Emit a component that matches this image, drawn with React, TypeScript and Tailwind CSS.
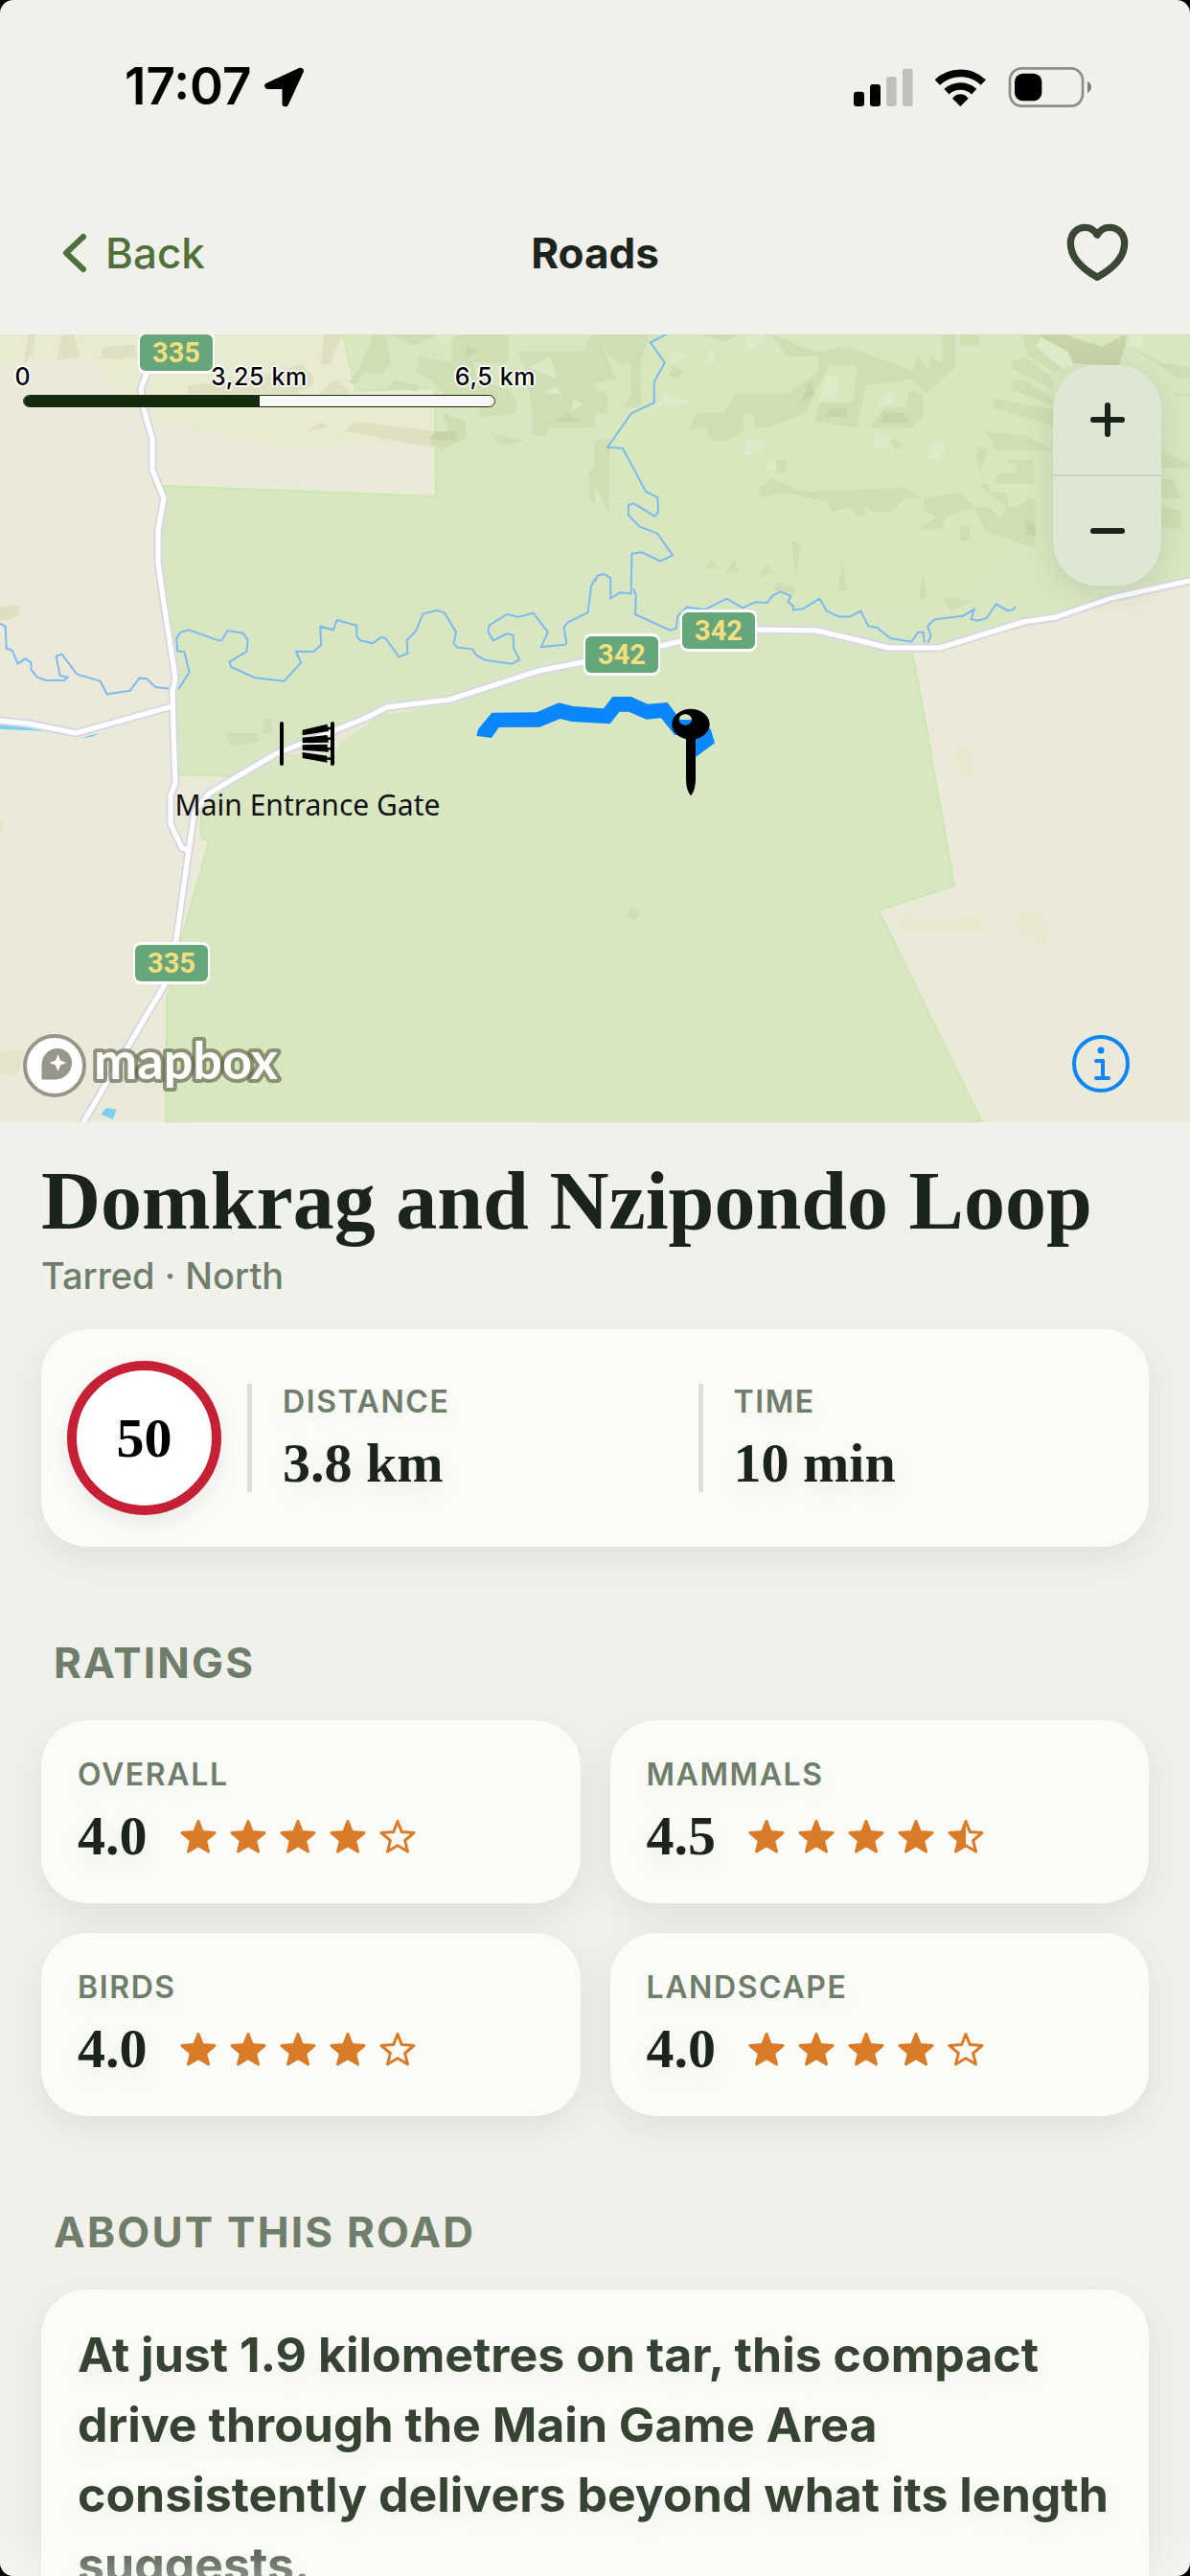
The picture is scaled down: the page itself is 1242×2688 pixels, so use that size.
import React from "react";

const sans = "font-['Inter','Liberation_Sans',sans-serif]";
const serif = "font-['Liberation_Serif',serif]";

/* Terrain and rivers are stored per map tile, in tile units. */
const NW = "translate(0 -9) scale(0.39605 0.33333)";
const NE = "translate(621 -9) scale(0.39605 0.33333)";
const SW = "translate(0 401) scale(0.39605 0.33333)";
const SE = "translate(621 401) scale(0.39605 0.33333)";
const ROUTE = "translate(480 291) scale(0.33333)";

const woodsNW = [
  "958,26 980,26 975,60 958,100 948,135 918,178 938,180 962,145 1005,150 1030,118 1018,38 1000,26",
  "1025,26 1155,26 1090,62",
  "1190,26 1340,26 1340,115 1250,115 1255,165 1345,205 1363,235 1250,230 1180,225 1130,165 1095,145 1105,95 1190,115",
  "1265,235 1363,230 1358,275 1265,285",
  "1365,80 1540,80 1558,26 1568,26 1568,318 1450,318 1437,345 1402,345 1400,235 1382,130",
  "1290,335 1385,360 1320,375",
  "1168,275 1228,300 1228,350 1165,390 1130,365 1150,330 1180,330",
  "1552,455 1568,450 1568,560 1552,535",
  "1040,170 1105,185 1100,205 1020,195",
];
const scrubNW = [
  "75,26 95,26 85,90 62,122",
  "165,26 195,26 210,95 150,108",
  "275,65 355,60 360,98 262,105",
  "855,26 905,26 880,80 870,122 845,120",
  "495,185 560,180 640,165 720,150 790,120 828,160 825,185 780,212 495,212",
  "885,168 930,212 840,212",
  "808,330 845,302 866,316",
  "935,300 1150,330 1150,382 908,330",
  "0,878 50,876 50,905 15,925 0,920",
];
const woodsNE = [
  "0,26 145,26 135,60 120,110 120,255 72,257 94,215 94,115 60,120 20,65 55,165 0,180",
  "0,195 33,212 33,272 0,272",
  "0,362 40,350 36,583 0,500",
  "270,26 380,26 340,50",
  "505,95 590,95 588,145 510,212 367,212 342,272 268,272 243,330 292,315 305,360 345,360 392,330 392,272 417,272 417,318 455,318 555,272 615,125 690,125 680,240 592,240 578,300 690,318 715,185 835,168 875,212 950,125 950,26 915,26 915,120 885,95 878,140 850,95 838,140 665,65 580,80 465,26",
  "727,318 760,258 820,255 828,200 864,215 864,285 835,318",
  "430,508 468,478 550,520 815,507 865,540 965,522 1000,568 925,598 913,638 853,638 900,598 865,575 865,540 815,540 780,582 730,582 713,558 713,596 690,596 678,566 625,582 612,550 495,522 440,538",
  "1000,568 1040,568 1060,598 1110,612 1060,625 1085,568 1035,522 1012,494 1035,494 1040,522 1085,522 1090,568 1120,565 1138,540 1160,540 1160,698 1025,640",
  "1050,494 1065,462 1110,462 1110,435 1075,420 1150,420 1160,494",
  "1025,330 1140,345 1207,390 1060,390",
  "1050,228 1207,260 1207,315 1050,255",
  "1100,168 1135,170 1207,228 1207,248 1100,200",
  "1100,108 1135,100 1207,165 1207,200 1100,135",
  "1125,26 1180,26 1160,65 1230,135 1207,145 1140,90",
  "1400,60 1493,115 1568,130 1568,162 1535,168 1493,130",
  "1493,205 1568,215 1568,222",
  "518,672 541,685 529,785", "652,730 663,825 640,832", "864,778 876,850 852,860",
  "305,730 328,758 293,758", "368,730 379,772 343,770", "455,745 466,772 430,788",
  "470,830 480,803 527,818 527,843", "913,848 1000,862 938,890",
  "478,418 504,418 504,462 478,462", "962,626 987,626 987,672 962,672",
  "962,26 1012,26 1012,62 962,62", "1000,375 1036,390 1015,460", "780,347 812,375 790,390",
  "1493,395 1568,430 1568,450 1493,440", "1493,478 1522,480 1546,540 1493,540",
  "1493,565 1546,580 1546,640 1493,630", "205,125 230,142 222,168 193,155",
];
const ridgesNE = [
  "605,285 618,257 664,257 664,285", "750,303 765,273 815,273 826,303", "540,245 568,170 578,215",
  "1172,26 1235,26 1280,45 1335,65 1400,26 1398,60 1380,125 1260,118 1245,80 1180,38",
  "1138,610 1160,628 1160,660 1136,650",
];
const meadowsNE = [
  "202,80 255,95 200,122", "308,68 318,115 293,122", "183,212 260,240 185,245 145,285",
  "403,360 443,362 440,390 390,405", "453,418 475,418 475,450 453,450",
  "740,335 775,350 770,380 730,388", "890,360 925,375 905,418 877,415",
  "395,35 443,28 440,50 405,78", "610,155 640,152 640,210 590,240", "775,200 790,235 745,255",
  "1175,38 1245,80 1262,125 1230,130 1160,65", "1410,26 1447,35 1440,65 1400,62",
];
const riversNW = [
  "0,932 14,940 17,1010 32,1016 47,1058 67,1042 82,1054 82,1076 98,1100 122,1110 170,1109 178,1101 158,1094 148,1034 163,1028 203,1091 264,1112 282,1153 343,1142 367,1103 387,1105 410,1131 450,1136",
  "470,1138 499,1085 486,1021 468,1018 465,980 474,960 498,952 575,985 584,985 600,954 641,962 653,985 650,1019 605,1052 609,1068 672,1102 749,1112 793,1054 780,1019 826,1020 846,999 844,941 878,952 888,921 940,938 940,971 950,985 981,994 1006,974 1016,978 1051,1036 1074,1026 1072,984 1095,957 1115,901 1151,891 1171,898 1202,959 1196,994 1206,1007 1245,1012 1255,1031 1278,1046 1349,1058 1369,1045 1354,1010 1352,968 1336,963 1300,985 1286,957 1290,937 1336,903 1367,911 1405,899 1444,959 1426,1005 1488,998 1493,994 1486,945 1496,928 1549,898 1558,815 1568,792",
];
const riversNE = [
  "0,800 6,782 24,777 41,790 41,853 66,835 95,838 97,713 124,709 172,737 205,718 164,650 117,628 88,592 88,561 102,556 158,596 167,582 165,537 134,519 73,383 33,380 95,275 156,240 156,175 184,115 146,52 195,22",
  "101,823 108,843 106,903 198,953 214,947 218,908 242,881 290,888 347,854 389,883 422,865 453,867 470,843 489,832 516,846 509,863 523,878 522,890 548,886 592,854 610,892 642,910 670,911 700,893 721,941 743,944 778,978 834,989 851,959 865,959 868,992",
  "877,993 885,971 877,940 894,919 970,908 999,888 991,918 1008,923 1032,915 1057,871 1087,891 1102,889 1108,878",
];
const roads = [
  "0,403 30,406 79,416 180,388",
  "155,20 153,41 147,57 150,78 159,109 159,141 171,171 165,204 165,238 170,274 183,358 180,373 181,411 183,468 178,481 178,511 190,536 197,538",
  "87,822 172,678 184,631 197,538 203,498 218,479 287,438 380,401 404,389 469,381 562,351 608,342 690,325 740,313 791,308 853,309 928,327 981,327 1068,300 1102,295 1160,275 1242,257",
];

function Patches({ tile, fill, shapes }: { tile: string; fill: string; shapes: string[] }) {
  return (
    <g transform={tile} fill={fill}>
      {shapes.map((p) => <polygon key={p} points={p} />)}
    </g>
  );
}

function Rivers({ tile, lines }: { tile: string; lines: string[] }) {
  return (
    <g transform={tile} fill="none" stroke="#7db9f2" strokeWidth="2">
      {lines.map((p) => <polyline key={p} points={p} vectorEffect="non-scaling-stroke" />)}
    </g>
  );
}

function Shield({ x, y, label }: { x: number; y: number; label: string }) {
  return (
    <g>
      <rect x={x - 40} y={y - 22} width="80" height="44" rx="8" fill="#fff" />
      <rect x={x - 38} y={y - 19} width="76" height="38" rx="6" fill="#65a67b" />
      <text x={x} y={y + 10} textAnchor="middle" fill="#f4df80" className="font-['Roboto',sans-serif] text-[29px] font-bold">
        {label}
      </text>
    </g>
  );
}

function RoadMap() {
  return (
    <svg viewBox="0 0 1242 822" className="block w-full" role="img" aria-label="Map of the road">
      <rect width="1242" height="822" fill="#ebe9d7" />
      <polygon points="0,0 356,0 368,60 452,60 452,110 300,120 160,90 90,20 0,30" fill="#e9ead2" />
      <polygon
        points="358,0 371,59 454,56 455,169 172,158 174,171 165,204 165,236 183,355 180,372 182,401 187,459 242,461 210,498 210,525 218,530 190,628 174,694 173,822 1025,822 917,601 996,575 965,401 952,331 981,328 1102,295 1160,274 1242,256 1242,0"
        fill="#d8e7c1"
        stroke="#cbe8b2"
        strokeWidth="2"
      />
      <polygon points="621,20 1090,20 1080,200 1000,280 800,290 700,220 640,150" fill="#d8e8bd" />
      <polygon points="250,560 420,520 520,640 560,822 200,822 220,700" fill="#d8e8be" />
      <polygon points="352,411 378,402 404,392 455,386 430,393 398,396 354,428 350,438 300,438" fill="#e9e8d2" />
      <Patches tile={NW} fill="#e0dfc2" shapes={scrubNW} />
      <Patches tile={NW} fill="#cfdfb3" shapes={woodsNW} />
      <Patches
        tile={NW}
        fill="#c7d4a8"
        shapes={["1130,355 1150,330 1203,330 1203,362", "1465,300 1495,272 1525,300", "1230,65 1262,78 1230,95"]}
      />
      <Patches
        tile={NW}
        fill="#dbe9c4"
        shapes={["1155,26 1212,26 1165,62", "1450,98 1467,165 1392,130", "1510,230 1538,243 1505,270", "1465,190 1480,215 1430,210"]}
      />
      <Patches tile={NE} fill="#cfdfb3" shapes={woodsNE} />
      <Patches tile={NE} fill="#c7d4a8" shapes={ridgesNE} />
      <Patches tile={NE} fill="#deebcb" shapes={meadowsNE} />
      <Patches tile={SW} fill="#cfdfb3" shapes={["597,45 680,45 680,72 607,88", "695,0 718,0 718,45 695,45"]} />
      <Patches tile={SW} fill="#e4e4cb" shapes={["0,300 10,355 0,362", "0,1042 65,1035 55,1090 35,1120 0,1105"]} />
      <Patches tile={SW} fill="#7bd0f2" shapes={["280,1218 307,1223 298,1254 266,1238", "0,12 130,40 0,32", "210,60 262,45 245,56"]} />
      <Patches tile={SE} fill="#cedfb4" shapes={["94,590 119,605 107,632 82,620"]} />
      <Patches tile={SE} fill="#e9e8d0" shapes={["950,90 990,88 998,190 955,165", "815,600 850,632 1010,620 1035,662 800,665", "1130,590 1198,632 1188,718 1105,645"]} />
      <Patches tile={SE} fill="#d8e8be" shapes={["520,725 620,750 620,985 570,980 530,900 510,830", "95,390 180,410 150,460 95,450", "800,400 870,405 860,465 795,470"]} />
      <Rivers tile={NW} lines={riversNW} />
      <Rivers tile={NE} lines={riversNE} />
      <g fill="none" stroke="#d6d8e6" strokeWidth="9" strokeLinejoin="round">
        {roads.map((p) => <polyline key={p} points={p} />)}
      </g>
      <g fill="none" stroke="#fff" strokeWidth="5" strokeLinejoin="round">
        {roads.map((p) => <polyline key={p} points={p} />)}
      </g>
      <Shield x={184} y={19} label="335" />
      <Shield x={179} y={656} label="335" />
      <Shield x={649} y={334} label="342" />
      <Shield x={750} y={309} label="342" />

      <g stroke="#000" strokeWidth="4" strokeLinecap="round">
        <path d="M294 406V448M347 406V448" />
      </g>
      <Patches
        tile={SW}
        fill="#000"
        shapes={[
          "797,35 862,17 866,39 797,52", "797,59 862,51 866,74 797,76", "797,82 862,80 866,104 797,98",
          "797,105 862,116 862,137 797,123", "862,26 878,26 878,34 862,34", "862,58 878,58 878,66 862,66",
          "862,90 878,90 878,98 862,98", "862,121 878,121 878,129 862,129",
        ]}
      />
      <text x="321" y="502" textAnchor="middle" fill="#111" className="font-['Noto_Sans',sans-serif] text-[30px]">
        Main Entrance Gate
      </text>

      <g transform={ROUTE}>
        <polygon
          points="100,311 240,310 310,280 355,291 450,298 478,261 536,261 588,284 650,279 690,333 727,333 785,362 798,406 738,450 712,450 710,385 672,380 630,328 584,332 529,308 500,308 470,346 350,339 314,330 250,356 122,357 99,390 52,384 57,363"
          fill="#0a86ff"
        />
        <path
          fillRule="evenodd"
          d="M723 299c32 0 59 21 59 48s-27 48-59 48-59-21-59-48 27-48 59-48zM706 316c-11 0-20 8-20 17s9 17 20 17 20-8 20-17-9-17-20-17z"
        />
        <path d="M708 388h30v130q0 36-15 53q-15-17-15-53z" />
      </g>

      <g>
        <circle cx="57" cy="763" r="31" fill="#fff" stroke="#98968a" strokeWidth="4" />
        <path d="M43.500 777.500V763C43.500 752 51 745 60 745S75 752 75 760C75 770 67 777.500 57 777.500Z" fill="#98968a" />
        <path d="M60.500 751L63 757.500L69.500 760L63 762.500L60.500 769L58 762.500L51.500 760L58 757.500Z" fill="#fff" />
        <text
          x="98"
          y="777"
          fill="#fff"
          stroke="#55593f"
          strokeOpacity="0.6"
          strokeWidth="8"
          strokeLinejoin="round"
          paintOrder="stroke"
          className="font-['Lato',sans-serif] text-[54px] font-bold"
        >
          mapbox
        </text>
      </g>
    </svg>
  );
}

function MapControls() {
  const cell = "flex h-[114px] w-[113px] items-center justify-center";
  return (
    <div className="absolute top-8 right-[30px] flex flex-col overflow-hidden rounded-[46px] bg-[#dde7d2] shadow-[0_6px_30px_rgba(60,80,40,0.14)]">
      <button type="button" aria-label="Zoom in" className={cell}>
        <svg viewBox="0 0 38 38" className="size-[38px]" stroke="#1a241b" strokeWidth="6" strokeLinecap="round">
          <path d="M19 4V34M4 19H34" />
        </svg>
      </button>
      <div className="h-0.5 bg-[#c9d1bf]" />
      <button type="button" aria-label="Zoom out" className={cell}>
        <svg viewBox="0 0 38 38" className="size-[38px]" stroke="#1a241b" strokeWidth="6" strokeLinecap="round">
          <path d="M4 19H34" />
        </svg>
      </button>
    </div>
  );
}

function ScaleBar() {
  const label =
    "absolute top-0 -translate-x-1/2 whitespace-nowrap [text-shadow:2px_0_#fff,-2px_0_#fff,0_2px_#fff,0_-2px_#fff,1px_1px_#fff,-1px_-1px_#fff,1px_-1px_#fff,-1px_1px_#fff]";
  return (
    <div className="absolute top-7 left-6 w-[493px]">
      <div className="relative h-[35px] text-[25px] leading-8 font-medium tracking-wide text-black">
        <span className={label + " left-0"}>0</span>
        <span className={label + " left-1/2"}>3,25 km</span>
        <span className={label + " left-full"}>6,5 km</span>
      </div>
      <div className="h-[13px] overflow-hidden rounded-full border border-[#152b10] bg-[#f7f7f7]">
        <div className="h-full w-1/2 bg-[#152b10]" />
      </div>
    </div>
  );
}

const STAR = "M19 2.500L23.300 13.600L36 14.500L26.600 22.500L29.500 34L19 27.700L8.500 34L11.400 22.500L2 14.500L14.700 13.600Z";

function Star({ fill }: { fill: number }) {
  return (
    <svg viewBox="0 0 38 37" className="h-[37px] w-[38px]" aria-hidden="true">
      <path d={STAR} fill={fill === 1 ? "#da7b29" : "none"} stroke="#da7b29" strokeWidth="3" strokeLinejoin="round" />
      {fill === 0.5 && (
        <path d="M19 2.500V27.700L8.500 34L11.400 22.500L2 14.500L14.700 13.600Z" fill="#da7b29" />
      )}
    </svg>
  );
}

const card = "rounded-[48px] bg-[#fbfcf7] shadow-[0_12px_36px_rgba(60,70,50,0.09)]";
const caption = "text-[32px] leading-10 font-semibold tracking-wider text-[#6f7e6a] [text-shadow:0_9px_24px_rgba(0,0,0,0.06)]";
const value = "font-['Liberation_Serif',serif] text-[58px] leading-16 font-bold text-[#1a241b] [text-shadow:0_9px_24px_rgba(0,0,0,0.08)]";
const heading = "mt-[93px] px-[13px] text-[44px] leading-14 font-bold tracking-wider text-[#6f7e6a]";

function Stat({ label, text }: { label: string; text: string }) {
  return (
    <div className="flex flex-1 items-center gap-8">
      <div className="h-[113px] w-[5px] bg-[#dedfda]" />
      <div className="flex flex-col gap-3">
        <div className={caption}>{label}</div>
        <div className={value}>{text}</div>
      </div>
    </div>
  );
}

function Rating({ label, score }: { label: string; score: number }) {
  return (
    <div className={card + " flex flex-col gap-3 px-[38px] pt-[37px] pb-[38px]"}>
      <div className={caption}>{label}</div>
      <div className="flex items-center gap-[34px]">
        <span className={value}>{score.toFixed(1)}</span>
        <div className="flex gap-3.5" role="img" aria-label={score + " of 5 stars"}>
          {[0, 1, 2, 3, 4].map((i) => (
            <Star key={i} fill={Math.max(0, Math.min(1, score - i))} />
          ))}
        </div>
      </div>
    </div>
  );
}

function StatusBar() {
  return (
    <div className="flex h-[182px] shrink-0 items-center justify-between pr-[103px] pl-[130px]">
      <div className="flex items-center gap-3 text-[53px] font-semibold text-black">
        17:07
        <svg viewBox="706 60 128 126" className="h-[42px] w-[43px]" aria-hidden="true">
          <path d="M821 72L719 119H774V174Z" stroke="#000" strokeWidth="20" strokeLinejoin="round" />
        </svg>
      </div>
      <svg viewBox="93 57 744 126" className="h-[42px] w-[248px]" aria-hidden="true">
        <rect x="93" y="134" width="33" height="46" rx="9" />
        <rect x="144" y="111" width="33" height="69" rx="9" />
        <rect x="195" y="87" width="32" height="93" rx="9" fill="#bec0ba" />
        <rect x="246" y="62" width="32" height="118" rx="9" fill="#bec0ba" />
        <g fill="none" stroke="#000" strokeWidth="23">
          <path d="M355 105A104 104 0 0 1 499 105" />
          <path d="M384 134A63 63 0 0 1 470 134" />
        </g>
        <path d="M427 180L402 155Q412 142 427 142T452 155Z" />
        <rect x="582" y="61" width="228" height="118" rx="37" fill="none" stroke="#8d8e88" strokeWidth="8" />
        <rect x="597" y="77" width="85" height="86" rx="26" />
        <path d="M825 101Q837 107 837 119T825 138Z" fill="#7b7c77" />
      </svg>
    </div>
  );
}

function NavBar() {
  return (
    <header className="grid h-[167px] shrink-0 grid-cols-3 items-center px-16 pb-1">
      <button type="button" className="flex items-center gap-[18px] justify-self-start text-[44px] font-medium text-[#4f7039]">
        <svg viewBox="0 0 28 42" className="h-[42px] w-7" fill="none" stroke="#4f7039" strokeWidth="6" strokeLinecap="round" strokeLinejoin="round">
          <path d="M23 4L5 21L23 38" />
        </svg>
        Back
      </button>
      <h1 className="justify-self-center text-[44px] font-bold text-[#1a241b]">Roads</h1>
      <button type="button" aria-label="Add to favourites" className="justify-self-end">
        <svg viewBox="746 550 194 182" className="h-[61px] w-[65px]" fill="none" stroke="#3a4735" strokeWidth="22" strokeLinejoin="round">
          <path d="M842 586C834 572 821 563 804 563C778 563 759 583 759 612C759 655 796 692 842 718C889 692 927 655 927 612C927 583 907 563 881 563C864 563 850 572 842 586Z" />
        </svg>
      </button>
    </header>
  );
}

export default function App() {
  return (
    <div className="h-screen bg-black">
      <div className={sans + " relative flex h-full flex-col overflow-hidden rounded-[14px] bg-[#f0f1eb]"}>
        <StatusBar />
        <NavBar />
        <main className="min-h-0 flex-1 overflow-y-auto [scrollbar-width:none]">
          <div className="relative">
            <RoadMap />
            <ScaleBar />
            <MapControls />
            <button type="button" aria-label="Map attribution" className="absolute right-[62px] bottom-[30px]">
              <svg viewBox="0 0 62 62" className="size-[62px]" fill="none" stroke="#0a86ff" strokeWidth="4" strokeLinecap="round" strokeLinejoin="round">
                <circle cx="31" cy="31" r="28" />
                <path d="M26 28H33V46M26 46H39" />
                <circle cx="31" cy="17" r="3.500" fill="#0a86ff" stroke="none" />
              </svg>
            </button>
          </div>

          <div className="px-[43px] pt-[34px] pb-16">
            <h2 className={serif + " text-[86px] leading-24 font-bold text-[#1a241b]"}>Domkrag and Nzipondo Loop</h2>
            <p className="mt-1.5 text-[38px] leading-12 font-medium text-[#6f7e6a]">Tarred · North</p>

            <section className={card + " mt-8 flex items-center gap-[27px] px-[27px] py-[33px]"}>
              <div className="flex size-[161px] shrink-0 items-center justify-center rounded-full border-10 border-[#c52036] bg-white font-['Liberation_Serif',serif] text-[58px] font-bold text-black shadow-[0_9px_24px_rgba(0,0,0,0.07)]">
                50
              </div>
              <Stat label="DISTANCE" text="3.8 km" />
              <Stat label="TIME" text="10 min" />
            </section>

            <h3 className={heading}>RATINGS</h3>
            <section className="mt-8 grid grid-cols-2 gap-[31px]">
              <Rating label="OVERALL" score={4} />
              <Rating label="MAMMALS" score={4.5} />
              <Rating label="BIRDS" score={4} />
              <Rating label="LANDSCAPE" score={4} />
            </section>

            <h3 className={heading}>ABOUT THIS ROAD</h3>
            <section className={card + " mt-8 px-[38px] py-8"}>
              <p className="text-[50px] leading-[73px] font-bold text-[#364332] [text-shadow:0_9px_24px_rgba(0,0,0,0.06)]">
                At just 1.9 kilometres on tar, this compact drive through the Main Game Area consistently delivers beyond
                what its length suggests.
              </p>
            </section>
          </div>
        </main>
        <div className="pointer-events-none absolute inset-x-0 bottom-0 h-12 bg-linear-to-b from-[#fbfcf7]/0 to-[#fbfcf7]/40" />
      </div>
    </div>
  );
}
